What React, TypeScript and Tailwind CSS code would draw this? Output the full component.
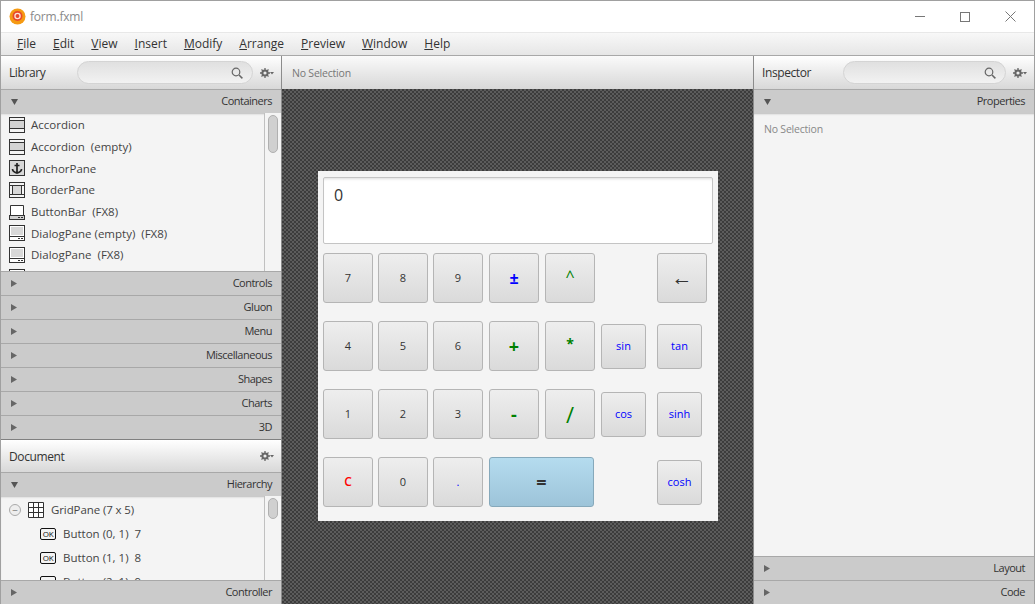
const font = { fontFamily: '"Open Sans", "Noto Sans", sans-serif' };

const menus = [
    ["F", "ile"],
    ["E", "dit"],
    ["V", "iew"],
    ["I", "nsert"],
    ["M", "odify"],
    ["A", "rrange"],
    ["P", "review"],
    ["W", "indow"],
    ["H", "elp"],
];

const Gear = () => (
    <svg width="14" height="10" viewBox="0 0 14 10" className="shrink-0">
        <circle cx="5" cy="5" r="2.6" fill="none" stroke="#666" strokeWidth="2" />
        <path d="M5 0v2M5 8v2M0 5h2M8 5h2M1.5 1.5l1.4 1.4M7.1 7.1l1.4 1.4M1.5 8.5l1.4-1.4M7.1 2.9l1.4-1.4" stroke="#666" strokeWidth="1.3" />
        <path d="M10 4h4l-2 2.5z" fill="#666" />
    </svg>
);

const SearchBox = () => (
    <div className="flex h-[23px] items-center justify-end rounded-full border border-[#d4d4d4] bg-gradient-to-b from-[#e0e0e0] to-[#f2f2f2] pr-[9px]">
        <svg width="12" height="12" viewBox="0 0 12 12">
            <circle cx="5" cy="5" r="3.8" fill="none" stroke="#666" strokeWidth="1.2" />
            <path d="M8 8l3.4 3.4" stroke="#666" strokeWidth="1.5" />
        </svg>
    </div>
);

const PanelHeader = ({ title, search, h = "h-[33px]", titleW = "w-[68px]" }: { title: string; search?: boolean; h?: string; titleW?: string }) => (
    <div className={`flex ${h} shrink-0 items-center bg-gradient-to-b from-white to-[#d8d8d8] pl-[8px] pr-[7px] text-[12px] tracking-[-0.4px] text-[#333]`}>
        <span className={`${titleW} shrink-0 pt-[1px]`}>{title}</span>
        <div className="flex-1">{search && <SearchBox />}</div>
        <div className="ml-[7px]">
            <Gear />
        </div>
    </div>
);

const Pane = ({ label, open }: { label: string; open?: boolean }) => (
    <div className="flex h-[24px] shrink-0 items-center justify-between border-t border-t-[#a8a8a8] bg-[#cbcbcb] pl-[10px] pr-[9px] text-[11px] tracking-[-0.5px] text-[#333]">
        {open ? (
            <svg width="7" height="6" viewBox="0 0 7 6">
                <path d="M0 0h7L3.5 6z" fill="#555" />
            </svg>
        ) : (
            <svg width="6" height="7" viewBox="0 0 6 7">
                <path d="M0 0l6 3.5L0 7z" fill="#666" />
            </svg>
        )}
        <span>{label}</span>
    </div>
);

const LibIcon = ({ kind }: { kind: string }) => {
    if (kind === "accordion")
        return (
            <svg width="16" height="16" viewBox="0 0 16 16">
                <rect x="0.5" y="0.5" width="15" height="15" fill="#f4f4f4" stroke="#333" />
                <rect x="1" y="4" width="14" height="7" fill="#d4d4d4" />
                <path d="M0 3.500h16M0 11.500h16" stroke="#333" />
            </svg>
        );
    if (kind === "anchor")
        return (
            <svg width="16" height="16" viewBox="0 0 16 16">
                <rect x="0.5" y="0.5" width="15" height="15" fill="#d8d8d8" stroke="#333" />
                <path d="M8 3v10M5.5 5.5h5M3.5 9c0 3 3 3.5 4.500 4 1.500-.5 4.500-1 4.500-4" fill="none" stroke="#222" strokeWidth="1.7" />
            </svg>
        );
    if (kind === "border")
        return (
            <svg width="16" height="16" viewBox="0 0 16 16">
                <rect x="0.500" y="0.500" width="15" height="15" fill="#f4f4f4" stroke="#333" />
                <rect x="3.500" y="3.500" width="9" height="9" fill="#d8d8d8" stroke="#333" />
                <path d="M0 3.500h16M0 12.500h16" stroke="#333" />
            </svg>
        );
    if (kind === "bar")
        return (
            <svg width="16" height="16" viewBox="0 0 16 16">
                <path d="M1.500 11V1.500h13V11" fill="#fff" stroke="#333" />
                <rect x="0.500" y="11.500" width="15" height="4" fill="#d0d0d0" stroke="#333" />
                <path d="M9 13.500h2M12 13.500h2" stroke="#333" />
            </svg>
        );
    return (
        <svg width="16" height="16" viewBox="0 0 16 16">
            <rect x="0.500" y="0.500" width="15" height="15" fill="#fff" stroke="#333" />
            <rect x="2" y="2" width="12" height="8" fill="#d8d8d8" />
            <path d="M0 11.500h16M9 13.500h2M12 13.500h2" stroke="#333" />
        </svg>
    );
};

const libraryRows = [
    ["accordion", "Accordion"],
    ["accordion", "Accordion  (empty)"],
    ["anchor", "AnchorPane"],
    ["border", "BorderPane"],
    ["bar", "ButtonBar  (FX8)"],
    ["dialog", "DialogPane (empty)  (FX8)"],
    ["dialog", "DialogPane  (FX8)"],
    ["dialog", "DialogPane  (FX8)"],
];

const Scrollbar = ({ top = "mt-[2px]", h = "h-[38px]" }: { top?: string; h?: string }) => (
    <div className="w-[17px] shrink-0 border-l border-l-[#c0c0c0] bg-[#f4f4f4] px-[3px]">
        <div className={`${top} ${h} rounded-full border border-[#b0b0b0] bg-[#d0d0d0]`}></div>
    </div>
);

const OkIcon = () => (
    <span className="flex h-[12px] w-[16px] shrink-0 items-center justify-center rounded-[2px] border border-[#111] text-[8px] leading-none tracking-[-0.3px] text-[#111]">
        OK
    </span>
);

const Key = ({ label, color = "text-[#333]", size = "h-[50px] w-[50px]", text = "text-[11px]", up }: { label: string; color?: string; size?: string; text?: string; up?: boolean }) => (
    <button className={`${size} flex items-center justify-center rounded-[3px] border border-[#b5b5b5] bg-gradient-to-b from-[#eeeeee] to-[#dadada] ${color} ${text} ${up ? "pb-[5px]" : ""}`}>
        {label}
    </button>
);

const Spacer = () => <div></div>;

export default function App() {
    return (
        <div className="flex h-[604px] w-[1035px] flex-col overflow-hidden border border-b-0 border-[#a0a0a0] bg-white" style={font}>
            {/* Title bar */}
            <div className="flex h-[31px] shrink-0 items-center bg-white pl-[8px] text-[12px] tracking-[-0.2px] text-[#8a8a8a]">
                <svg width="17" height="17" viewBox="0 0 17 17">
                    <circle cx="8.500" cy="8.500" r="8" fill="#f59a12" />
                    <circle cx="8.500" cy="8" r="5" fill="#e8482a" />
                    <circle cx="8.500" cy="8" r="2.600" fill="none" stroke="#fde4d6" strokeWidth="1.300" />
                </svg>
                <span className="ml-[4px]">form.fxml</span>
                <div className="ml-auto flex items-center">
                    <div className="mr-[35px] h-px w-[10px] bg-[#777]"></div>
                    <div className="mr-[35px] h-[10px] w-[10px] border border-[#777]"></div>
                    <svg width="11" height="11" viewBox="0 0 11 11" className="mr-[18px]">
                        <path d="M.500.500l10 10M10.500.500l-10 10" stroke="#777" />
                    </svg>
                </div>
            </div>

            {/* Menu bar */}
            <div className="flex h-[24px] shrink-0 items-center gap-[17px] border-t border-b border-t-[#e8e8e8] border-b-[#a8a8a8] bg-gradient-to-b from-[#f8f8f8] to-[#e6e6e6] pl-[16px] text-[12px] text-[#333]">
                {menus.map(([first, rest]) => (
                    <span key={first}>
                        <span className="underline">{first}</span>
                        {rest}
                    </span>
                ))}
            </div>

            <div className="flex min-h-0 flex-1">
                {/* Left column */}
                <div className="flex w-[281px] shrink-0 flex-col border-r border-r-[#8c8c8c]">
                    <PanelHeader title="Library" search />
                    <Pane label="Containers" open />
                    <div className="flex h-[158px] shrink-0 overflow-hidden bg-[#f4f4f4] shadow-[inset_0_2px_2px_-1px_#bbb]">
                        <div className="flex-1 overflow-hidden pl-[8px] pt-[1px]">
                            {libraryRows.map(([kind, name], i) => (
                                <div key={i} className="flex h-[21.7px] items-center gap-[6px] whitespace-pre text-[11.500px] text-[#444]">
                                    <LibIcon kind={kind} />
                                    {name}
                                </div>
                            ))}
                        </div>
                        <Scrollbar />
                    </div>
                    {["Controls", "Gluon", "Menu", "Miscellaneous", "Shapes", "Charts", "3D"].map((p) => (
                        <Pane key={p} label={p} />
                    ))}
                    <div className="shrink-0 border-t border-t-[#808080]">
                        <PanelHeader title="Document" h="h-[32px]" />
                    </div>
                    <Pane label="Hierarchy" open />
                    <div className="flex h-[84px] shrink-0 overflow-hidden bg-[#f4f4f4] shadow-[inset_0_2px_2px_-1px_#bbb]">
                        <div className="flex-1 overflow-hidden pt-[2px] text-[11.500px] text-[#444]">
                            <div className="flex h-[24px] items-center pl-[8px]">
                                <span className="flex h-[12px] w-[12px] items-center justify-center rounded-full border border-[#aaa] bg-[#eee] text-[10px] leading-none text-[#777]">
                                    −
                                </span>
                                <svg width="16" height="16" viewBox="0 0 16 16" className="ml-[7px]">
                                    <path d="M.500.500h15v15H.500zM5.500 0v16M10.500 0v16M0 5.500h16M0 10.500h16" fill="#fff" stroke="#333" />
                                </svg>
                                <span className="ml-[7px] tracking-[-0.1px]">GridPane (7 x 5)</span>
                            </div>
                            {["Button (0, 1)  7", "Button (1, 1)  8", "Button (2, 1)  9"].map((b) => (
                                <div key={b} className="flex h-[24px] items-center gap-[7px] whitespace-pre pl-[39px]">
                                    <OkIcon />
                                    {b}
                                </div>
                            ))}
                        </div>
                        <Scrollbar top="mt-[2px]" h="h-[21px]" />
                    </div>
                    <Pane label="Controller" />
                </div>

                {/* Center column */}
                <div className="flex min-w-0 flex-1 flex-col">
                    <div className="flex h-[33px] shrink-0 items-center bg-gradient-to-b from-[#fafafa] to-[#d8d8d8] pl-[10px] pt-[2px] text-[10.500px] tracking-[-0.2px] text-[#777]">
                        No Selection
                    </div>
                    <div className="flex flex-1 items-start justify-center bg-[#4a4a4a] bg-[conic-gradient(#5c5c5c_25%,#3c3c3c_0_50%,#5c5c5c_0_75%,#3c3c3c_0)] bg-[length:4px_4px] pl-[1px] pt-[82px]">
                        <div className="h-[350px] w-[400px] bg-[#f4f4f4] pl-[5px] pt-[6px]">
                            <div className="h-[67px] w-[390px] rounded-[2px] border border-[#c4c4c4] bg-white pl-[10px] pt-[5px] text-[16px] text-[#333] shadow-[inset_0_3px_3px_-2px_#ddd]">
                                0
                            </div>
                            <div className="mt-[9px] grid grid-cols-[55px_55px_56px_56px_56px_56px_50px] grid-rows-[50px_50px_50px_50px] items-center gap-y-[18px]">
                                <Key label="7" />
                                <Key label="8" />
                                <Key label="9" />
                                <Key label="±" color="text-[#0000ff]" text="text-[16px] font-bold" />
                                <Key label="^" color="text-[#008000]" text="text-[16px]" up />
                                <Spacer />
                                <Key label="←" text="text-[21px]" />

                                <Key label="4" />
                                <Key label="5" />
                                <Key label="6" />
                                <Key label="+" color="text-[#008000]" text="text-[18px] font-bold" />
                                <Key label="*" color="text-[#008000]" text="text-[14px] font-bold" up />
                                <Key label="sin" color="text-[#0000ff]" size="h-[45px] w-[45px]" />
                                <Key label="tan" color="text-[#0000ff]" size="h-[45px] w-[45px]" />

                                <Key label="1" />
                                <Key label="2" />
                                <Key label="3" />
                                <Key label="-" color="text-[#008000]" text="text-[18px] font-bold" />
                                <Key label="/" color="text-[#008000]" text="text-[22px]" />
                                <Key label="cos" color="text-[#0000ff]" size="h-[45px] w-[45px]" />
                                <Key label="sinh" color="text-[#0000ff]" size="h-[45px] w-[45px]" />

                                <Key label="C" color="text-[#ff0000]" text="text-[12px] font-semibold" />
                                <Key label="0" />
                                <Key label="." color="text-[#0000ff]" />
                                <button className="col-span-2 flex h-[50px] w-[105px] items-center justify-center rounded-[3px] border border-[#86a9bb] bg-gradient-to-b from-[#b5dcef] to-[#9dc4d9] text-[18px] font-bold text-[#333]">
                                    =
                                </button>
                                <Spacer />
                                <Key label="cosh" color="text-[#0000ff]" size="h-[45px] w-[45px]" />
                            </div>
                        </div>
                    </div>
                </div>

                {/* Right column */}
                <div className="flex w-[281px] shrink-0 flex-col border-l border-l-[#8c8c8c]">
                    <PanelHeader title="Inspector" search titleW="w-[81px]" />
                    <Pane label="Properties" open />
                    <div className="flex-1 bg-[#f4f4f4] pl-[10px] pt-[9px] text-[10.500px] tracking-[-0.2px] text-[#888] shadow-[inset_0_2px_2px_-1px_#bbb]">
                        No Selection
                    </div>
                    <Pane label="Layout" />
                    <Pane label="Code" />
                </div>
            </div>
        </div>
    );
}
